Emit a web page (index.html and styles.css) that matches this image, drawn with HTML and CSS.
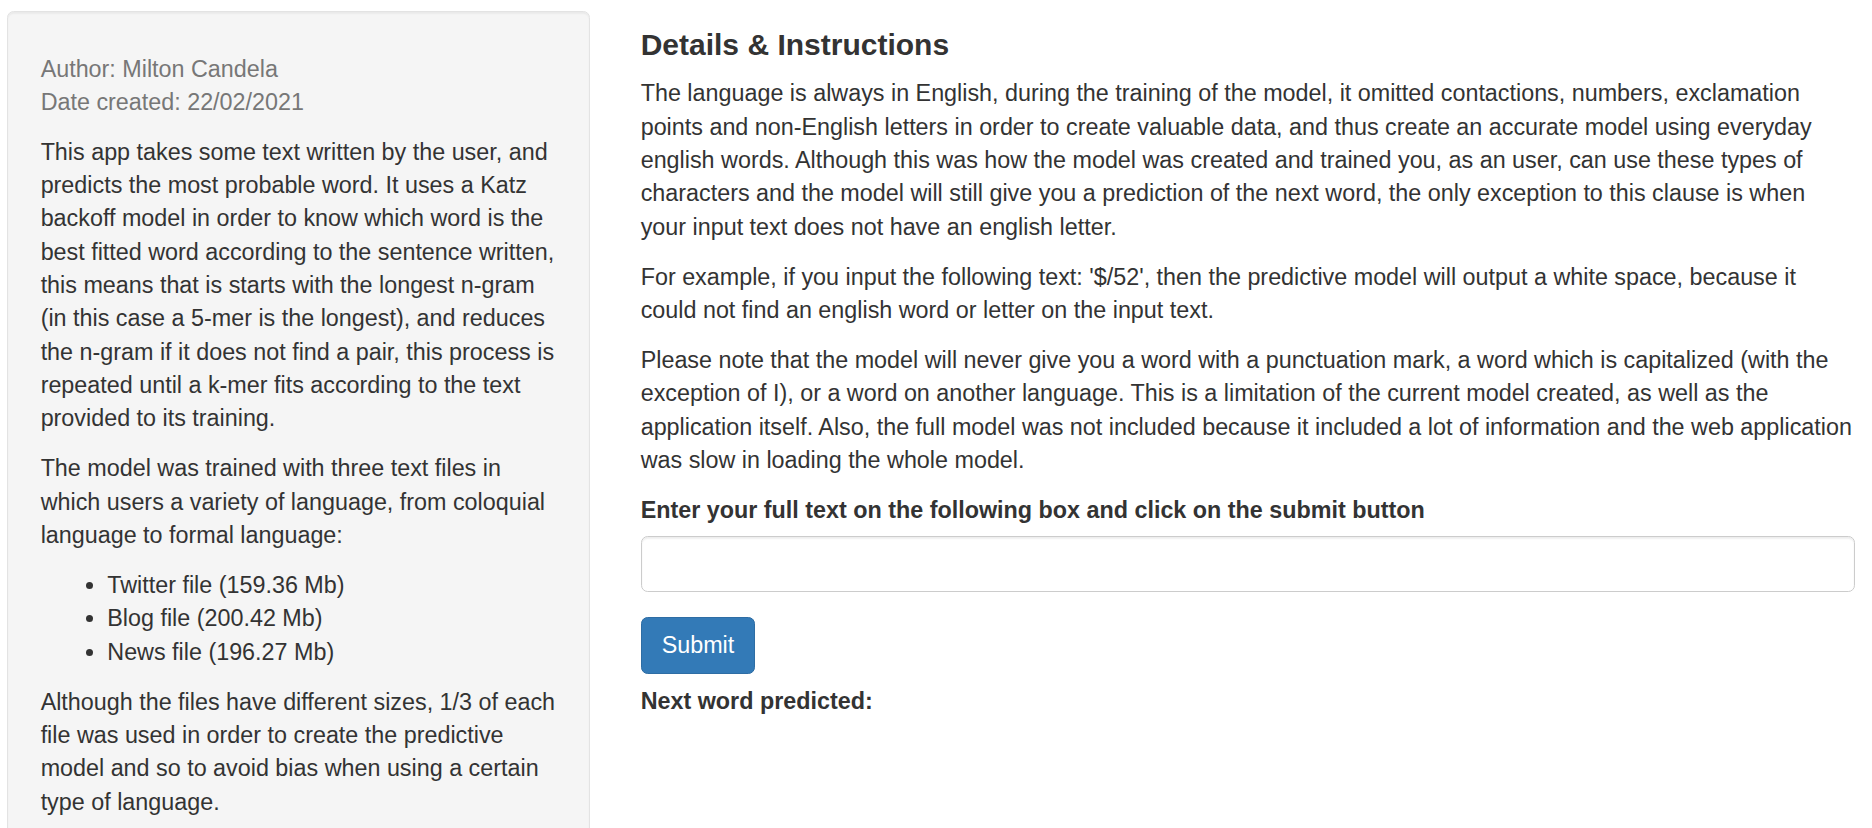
FILE: index.html
```html
<!DOCTYPE html>
<html lang="en">
<head>
<meta charset="utf-8">
<title>Next Word Prediction</title>
<link rel="stylesheet" href="styles.css">
</head>
<body>
<div class="layout">
  <aside class="sidebar">
    <form class="well">
      <p class="meta">Author: Milton Candela<br>Date created: 22/02/2021</p>
      <p>This app takes some text written by the user, and predicts the most probable word. It uses a Katz backoff model in order to know which word is the best fitted word according to the sentence written, this means that is starts with the longest n-gram (in this case a 5-mer is the longest), and reduces the n-gram if it does not find a pair, this process is repeated until a k-mer fits according to the text provided to its training.</p>
      <p>The model was trained with three text files in which users a variety of language, from coloquial language to formal language:</p>
      <ul>
        <li>Twitter file (159.36 Mb)</li>
        <li>Blog file (200.42 Mb)</li>
        <li>News file (196.27 Mb)</li>
      </ul>
      <p>Although the files have different sizes, 1/3 of each file was used in order to create the predictive model and so to avoid bias when using a certain type of language.</p>
    </form>
  </aside>
  <main class="main">
    <h4 class="title">Details &amp; Instructions</h4>
    <p>The language is always in English, during the training of the model, it omitted contactions, numbers, exclamation points and non-English letters in order to create valuable data, and thus create an accurate model using everyday english words. Although this was how the model was created and trained you, as an user, can use these types of characters and the model will still give you a prediction of the next word, the only exception to this clause is when your input text does not have an english letter.</p>
    <p>For example, if you input the following text: '$/52', then the predictive model will output a white space, because it could not find an english word or letter on the input text.</p>
    <p>Please note that the model will never give you a word with a punctuation mark, a word which is capitalized (with the exception of I), or a word on another language. This is a limitation of the current model created, as well as the application itself. Also, the full model was not included because it included a lot of information and the web application was slow in loading the whole model.</p>
    <div class="form-group">
      <label class="control-label" for="text">Enter your full text on the following box and click on the submit button</label>
      <input class="form-control" id="text" type="text" value="">
    </div>
    <button class="btn btn-primary" type="button">Submit</button>
    <div class="result">Next word predicted:</div>
  </main>
</div>
</body>
</html>
```
FILE: styles.css
```css
html, body {
  margin: 0;
  padding: 0;
  background: #fff;
}
body {
  font-family: "Liberation Sans", Arial, Helvetica, sans-serif;
  font-size: 23.333px;
  line-height: 33.333px;
  color: #333;
  overflow: hidden;
}
.layout {
  display: flex;
  align-items: flex-start;
  padding: 11px 0 0 7.3px;
  gap: 50.7px;
}
.sidebar {
  width: 582.7px;
  flex: none;
}
.well {
  margin: 0 0 33.3px;
  background: #f5f5f5;
  border: 1px solid #e3e3e3;
  border-radius: 6.67px;
  box-shadow: inset 0 1.67px 1.67px rgba(0,0,0,.05);
  padding: 32.33px 32.33px;
}
.well p {
  margin: 0 0 16.67px;
}
.well .meta {
  margin-top: 8.2px;
  color: #777;
}
.well ul {
  margin: 0 0 16.67px;
  padding-left: 66.67px;
}
.main {
  width: 1214.7px;
  flex: none;
}
.title {
  font-size: 30px;
  line-height: 33px;
  font-weight: 700;
  margin: 16.67px 0 16.67px;
}
.main p {
  margin: 0 0 16.67px;
}
.form-group {
  margin-bottom: 25px;
}
.control-label {
  display: inline-block;
  font-weight: 700;
  margin-bottom: 8.33px;
}
.form-control {
  display: block;
  box-sizing: border-box;
  width: 100%;
  height: 56.67px;
  padding: 10px 20px;
  font: inherit;
  color: #555;
  background: #fff;
  border: 1px solid #ccc;
  border-radius: 6.67px;
  box-shadow: inset 0 1.67px 1.67px rgba(0,0,0,.075);
  margin: 0;
  outline: none;
}
.btn {
  display: inline-block;
  box-sizing: border-box;
  height: 56.67px;
  padding: 10px 20px;
  font: inherit;
  border-radius: 6.67px;
  cursor: pointer;
  margin: 0;
}
.btn-primary {
  color: #fff;
  background: #337ab7;
  border: 1px solid #2e6da4;
}
.result {
  font-weight: 700;
  margin-top: 11.5px;
}
```
